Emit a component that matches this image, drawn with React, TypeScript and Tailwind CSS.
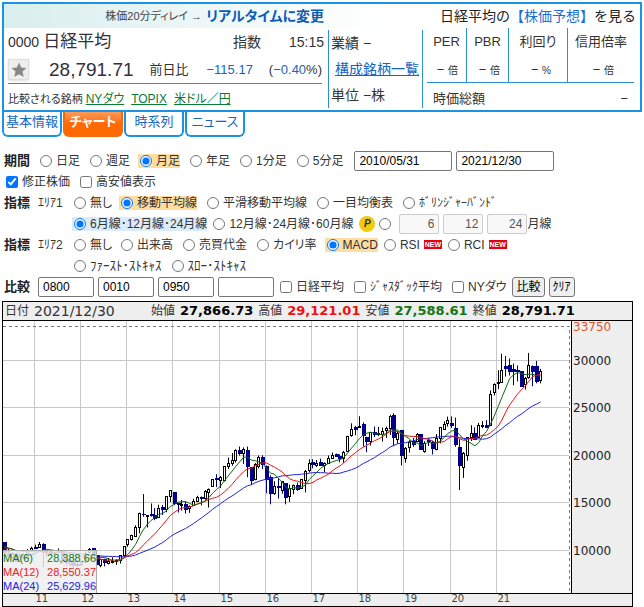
import { useState, type ReactNode } from "react";
import { clsx } from "clsx";

// [open, high, low, close] per month, from 2010/05
const CANDLES: number[][] = [
  [10847, 10847, 9395, 9768], [9650, 10251, 9347, 9382], [9279, 9807, 9091, 9537], [9509, 9750, 8807, 8824],
  [8832, 9704, 8796, 9369], [9419, 9716, 9179, 9202], [9166, 10157, 9123, 9937], [9939, 10394, 9918, 10228],
  // 2011
  [10352, 10620, 10182, 10237], [10281, 10891, 10281, 10624], [10676, 10768, 8227, 9755], [9757, 10018, 9405, 9849],
  [9964, 10017, 9406, 9693], [9719, 9849, 9318, 9816], [9878, 10207, 9824, 9833], [9907, 10040, 8619, 8955],
  [9006, 9098, 8359, 8700], [8567, 9152, 8343, 8988], [8880, 8880, 8135, 8434], [8542, 8729, 8272, 8455],
  // 2012
  [8549, 8911, 8349, 8802], [8789, 9866, 8780, 9723], [9771, 10255, 9509, 10083], [10161, 10190, 9388, 9520],
  [9471, 9471, 8512, 8542], [8440, 9044, 8238, 9006], [9103, 9136, 8328, 8695], [8642, 9222, 8529, 8839],
  [8828, 9288, 8646, 8870], [8796, 9075, 8488, 8928], [8942, 9492, 8619, 9446], [9484, 10433, 9376, 10395],
  // 2013
  [10604, 11138, 10398, 11138], [11193, 11662, 11046, 11559], [11464, 12650, 11425, 12397], [12371, 13983, 11805, 13860],
  [13799, 15942, 13555, 13774], [13570, 13724, 12415, 13677], [13746, 14953, 13562, 13668], [13692, 14466, 13188, 13388],
  [13438, 14817, 13407, 14455], [14517, 14799, 13748, 14327], [14291, 15729, 14026, 15661], [15700, 16320, 15112, 16291],
  // 2014
  [16147, 16164, 14764, 14914], [14896, 14900, 13995, 14841], [14744, 15312, 14203, 14827], [14870, 15164, 13885, 14304],
  [14370, 14744, 13964, 14632], [14706, 15442, 14690, 15162], [15179, 15759, 15101, 15620], [15600, 15700, 14753, 15424],
  [15425, 16374, 15350, 16173], [16082, 16533, 14529, 16413], [16720, 17520, 16720, 17459], [17547, 18030, 16672, 17450],
  // 2015
  [17325, 17850, 16592, 17674], [17400, 18865, 17271, 18797], [18869, 19778, 18577, 19206], [19129, 20252, 18927, 19520],
  [19510, 20655, 19257, 20563], [20500, 20952, 19990, 20235], [20212, 20850, 19115, 20585], [20510, 20946, 17714, 18890],
  [18703, 18770, 16901, 17388], [17500, 19202, 17389, 19083], [18860, 19994, 18641, 19747], [19800, 20012, 18562, 19033],
  // 2016
  [18818, 18951, 16017, 17518], [17699, 17905, 14865, 16026], [16013, 17291, 15857, 16758], [16719, 17613, 15471, 16666],
  [16357, 17251, 15975, 17234], [17097, 17097, 14864, 15575], [15698, 16938, 15106, 16569], [16415, 16943, 15921, 16887],
  [16885, 17156, 16285, 16449], [16566, 17461, 16554, 17425], [17419, 18482, 16111, 18308], [18435, 19592, 18227, 19114],
  // 2017
  [19298, 19615, 18650, 19041], [18993, 19519, 18805, 19118], [19300, 19668, 18909, 18909], [18988, 19289, 18224, 19196],
  [19154, 19998, 19144, 19650], [19692, 20318, 19686, 20033], [20055, 20200, 19856, 19925], [19907, 20113, 19280, 19646],
  [19733, 20481, 19239, 20356], [20400, 22086, 20363, 22011], [22144, 23382, 21972, 22724], [22916, 23115, 22119, 22764],
  // 2018
  [23073, 24129, 23065, 23098], [23276, 23492, 20950, 22068], [21901, 21971, 20347, 21454], [21441, 22495, 21056, 22467],
  [22453, 23050, 21931, 22201], [22169, 23011, 22038, 22304], [22233, 22949, 21462, 22553], [22642, 23032, 21851, 22865],
  [22819, 24286, 22172, 24120], [24173, 24448, 20971, 21920], [21687, 22583, 21243, 22351], [22629, 22698, 18948, 20014],
  // 2019
  [19655, 20892, 19241, 20773], [20797, 21610, 20315, 21385], [21500, 21860, 20911, 21205], [21500, 22362, 21400, 22258],
  [22184, 22184, 20581, 20601], [20410, 21497, 20289, 21275], [21566, 21823, 20993, 21521], [21361, 21556, 20110, 20704],
  [20625, 22255, 20554, 21755], [21831, 23008, 21276, 22927], [22730, 23591, 22705, 23293], [23388, 24091, 23044, 23656],
  // 2020
  [23319, 24115, 22892, 23205], [22874, 23995, 20916, 21142], [20849, 21719, 16358, 18917], [18686, 20365, 17646, 20193],
  [19991, 21955, 19448, 21877], [21910, 23185, 21530, 22288], [22338, 22965, 21710, 21710], [21947, 23431, 21947, 23139],
  [23089, 23622, 22878, 23185], [23185, 23725, 22948, 22977], [23110, 26852, 23096, 26433], [26624, 27602, 26327, 27444],
  // 2021
  [27575, 28979, 27002, 27663], [27649, 30714, 27629, 28966], [29419, 30485, 28308, 29178], [29441, 30208, 28419, 28812],
  [29024, 29685, 27385, 28860], [28998, 29480, 27795, 28791], [28832, 28832, 27272, 27283], [27493, 28279, 26954, 28089],
  [28179, 30795, 28075, 29452], [29400, 29489, 27293, 28892], [29331, 29960, 27594, 27821], [27866, 29121, 27588, 28791],
];

// closes before the first candle, needed for the moving averages
const EARLIER = [
  13481, 13376, 13072, 11259, 8576, 8512, 8859, 7994, 7568, 8109, 8828, 9522,
  9958, 10356, 10492, 10133, 10034, 9345, 10546, 10198, 10126, 11089, 11057,
];

const PRICES = [30000, 25000, 20000, 15000, 10000];
const YEARS = [11, 12, 13, 14, 15, 16, 17, 18, 19, 20, 21];

const px = (i: number) => 1.5 + i * 3.856;
const py = (p: number) => 39.5 + (30000 - p) * 0.0095;
const crisp = (n: number) => Math.floor(n) + 0.5;
const gridX = (k: number) => crisp(31.3 + 46.2 * k);

function movingAverage(n: number) {
  const closes = [...EARLIER, ...CANDLES.map((c) => c[3])];
  return CANDLES.map((_, i) => {
    const end = i + EARLIER.length + 1;
    const part = closes.slice(end - n, end);
    const avg = part.reduce((a, b) => a + b, 0) / part.length;
    return `${px(i).toFixed(1)},${py(avg).toFixed(1)}`;
  }).join(" ");
}

function Candle({ i, data }: { i: number; data: number[] }) {
  const [open, high, low, close] = data;
  const x = crisp(px(i));
  const up = close >= open;
  const top = crisp(py(Math.max(open, close)));
  const bottom = crisp(py(Math.min(open, close)));
  const color = up ? "#000" : "#00008b";
  return (
    <g>
      <line x1={x} x2={x} y1={py(high)} y2={py(low)} stroke={color} />
      {up ? (
        <rect x={x - 1} y={top} width={2} height={Math.max(bottom - top, 1)} fill="#fff" stroke={color} />
      ) : (
        <rect x={x - 1.5} y={top - 0.5} width={4} height={bottom - top + 1} fill={color} />
      )}
    </g>
  );
}

function Chart() {
  return (
    <svg viewBox="0 0 629 285" className="block w-full" role="img" aria-label="日経平均 月足チャート">
      <rect width={629} height={285} fill="#eee" />
      <rect width={568} height={272} fill="#fff" />
      <g stroke="#c8c8c8">
        {PRICES.map((p) => (
          <line key={p} x1={0} x2={566} y1={crisp(py(p) - 0.1)} y2={crisp(py(p) - 0.1)} />
        ))}
        {YEARS.map((y, k) => (
          <line key={y} x1={gridX(k)} x2={gridX(k)} y1={0} y2={272} />
        ))}
      </g>
      <path d="M0 5.5H566.5V272" fill="none" stroke="#777" strokeDasharray="3 3" />
      {CANDLES.map((c, i) => (
        <Candle key={i} i={i} data={c} />
      ))}
      <g fill="none" strokeWidth={1}>
        <polyline points={movingAverage(24)} stroke="#2222dd" />
        <polyline points={movingAverage(12)} stroke="#ee1111" />
        <polyline points={movingAverage(6)} stroke="#116611" />
      </g>
      <path d="M568.5 0V272M0 272.5H629" stroke="#000" />
      <g fontFamily="DejaVu Sans, sans-serif" fontSize={12} fill="#222">
        <text x={570} y={10} fill="#e0532f">33750</text>
        {PRICES.map((p) => (
          <text key={p} x={570} y={py(p) + 4}>{p}</text>
        ))}
      </g>
      <g fontFamily="DejaVu Sans, sans-serif" fontSize={10} fill="#444">
        {YEARS.map((y, k) => (
          <text key={y} x={gridX(k) + 1} y={281}>{y}</text>
        ))}
      </g>
    </svg>
  );
}

function Choice({
  name,
  label,
  type = "radio",
  checked = false,
  tone,
  className,
}: {
  name: string;
  label: ReactNode;
  type?: "radio" | "checkbox";
  checked?: boolean;
  tone?: "orange" | "blue";
  className?: string;
}) {
  return (
    <label
      className={clsx(
        "flex h-[14px] items-center gap-1 whitespace-nowrap",
        tone && "-ml-0.5 pl-0.5",
        tone === "orange" && "bg-[#ffdda0]",
        tone === "blue" && "bg-[#dcebfa]",
        className,
      )}
    >
      <input type={type} name={name} defaultChecked={checked} className="m-0 size-3 shrink-0 accent-[#0075ff]" />
      {label}
    </label>
  );
}

function Row({ title, area, children }: { title?: string; area?: string; children: ReactNode }) {
  return (
    <div className="flex h-[21px] items-center">
      <span className="w-[34px] shrink-0 text-[13px] font-bold text-[#222]">{title}</span>
      {area !== undefined && <span className="w-9 shrink-0">{area}</span>}
      <div className="flex items-center gap-[10px]">{children}</div>
    </div>
  );
}

const NewBadge = () => (
  <span className="flex h-[9px] w-[18px] items-center justify-center bg-[#e60012] text-[7px] font-bold leading-none text-white">
    NEW
  </span>
);

const field = "h-5 rounded-[2px] border border-[#767676] bg-white px-1 text-xs text-black";
const button = "h-5 rounded-[3px] border border-[#767676] bg-[#efefef] px-[3px] text-xs leading-none text-black";

const TABS = ["基本情報", "チャート", "時系列", "ニュース"];
const RATIOS = [
  { label: "PER", unit: "倍", width: "w-10" },
  { label: "PBR", unit: "倍", width: "w-[42px]" },
  { label: "利回り", unit: "%", width: "w-[59px]" },
  { label: "信用倍率", unit: "倍", width: "grow" },
];

function Quote() {
  return (
    <section className="border-2 border-[#1a93e6]">
      <div className="flex h-6 items-center bg-linear-to-r from-[#d9eeee] to-white to-60% pr-1">
        <div className="flex w-[320px] items-center justify-end gap-1 whitespace-nowrap text-[11px] text-[#444]">
          株価20分ディレイ →
          <a href="#realtime" className="text-[14px] font-bold text-[#0a5cb8]">リアルタイムに変更</a>
        </div>
        <div className="ml-auto whitespace-nowrap text-[14px] text-[#222] [font-feature-settings:normal]">
          日経平均の<a href="#forecast" className="text-[#1a6fd0]">【株価予想】</a>を見る
        </div>
      </div>
      <div className="flex h-[82px]">
        <div className="flex w-[324px] shrink-0 flex-col pl-1 pr-1">
          <div className="flex h-7 items-center">
            <span className="text-[14px]">0000</span>
            <h1 className="ml-1 text-[17px] text-[#332f3c]">日経平均</h1>
            <span className="ml-auto text-[14px]">指数</span>
            <span className="ml-7 text-[14px]">15:15</span>
          </div>
          <div className="mr-0.5 flex h-7 items-center border-b border-[#2b8fd6] whitespace-nowrap">
            <button
              aria-label="お気に入り"
              className="flex size-[21px] items-center justify-center border border-[#ddd] bg-[#eee] shadow-sm"
            >
              <svg viewBox="0 0 16 16" className="size-4">
                <path d="M8 .5l2.2 5 5.3.5-4 3.6 1.2 5.4L8 12.2 3.3 15l1.2-5.4-4-3.6 5.3-.5z" fill="#888" />
              </svg>
            </button>
            <span className="ml-5 text-[19px] text-[#332f3c]">28,791.71</span>
            <span className="ml-4 text-[13px]">前日比</span>
            <span className="ml-auto text-[13px] text-[#1766c2]">−115.17</span>
            <span className="ml-4 text-[13px]">
              (<span className="text-[#1766c2]">−0.40</span>%)
            </span>
          </div>
          <div className="flex grow items-center gap-[7px] whitespace-nowrap pt-1 text-[12px] text-[#0b7a35]">
            <span className="-mr-1 text-[11px] text-[#333]">比較される銘柄</span>
            <a href="#ny" className="underline">NYダウ</a>
            <a href="#topix" className="underline">TOPIX</a>
            <a href="#usd" className="underline">米ドル／円</a>
          </div>
        </div>
        <div className="my-0.5 flex w-[95px] shrink-0 flex-col justify-around border-x border-[#2b8fd6] pl-0.5 text-[14px] leading-5">
          <span>業績 −</span>
          <a href="#list" className="ml-1 text-[#1766c2] underline">構成銘柄一覧</a>
          <span>単位 −株</span>
        </div>
        <div className="flex grow flex-col pl-1 pr-1.5">
          <dl className="flex h-[55px] border-b border-[#2b8fd6] text-center">
            {RATIOS.map((r) => (
              <div
                key={r.label}
                className={clsx("border-[#2b8fd6] text-[13px] leading-7 not-last:border-r", r.width)}
              >
                <dt className="h-7 whitespace-nowrap">{r.label}</dt>
                <dd className={clsx("whitespace-nowrap text-right", r.unit === "%" ? "pr-4" : r.width === "grow" ? "pr-5" : "pr-2")}>
                  − <span className="text-[10px]">{r.unit}</span>
                </dd>
              </div>
            ))}
          </dl>
          <div className="flex grow items-center justify-between px-1.5 pt-1 text-[13px]">
            <span>時価総額</span>
            <span>−</span>
          </div>
        </div>
      </div>
    </section>
  );
}

export default function App() {
  const [tab, setTab] = useState("チャート");

  return (
    <main className="bg-white px-0.5 pt-0.5 font-['Liberation_Sans','Noto_Sans_CJK_JP',sans-serif] text-xs leading-[14px] text-[#333] [font-feature-settings:'palt']">
      <Quote />
      <nav className="flex gap-px">
        {TABS.map((t) => (
          <button
            key={t}
            onClick={() => setTab(t)}
            className={clsx(
              "h-[25px] w-[60px] rounded-b-md border-2 border-t-0 pb-1 text-[13px] leading-none whitespace-nowrap",
              t === tab
                ? "border-[#f76b0a] bg-linear-to-b from-[#ff9a55] to-[#ff6a00] to-50% font-bold text-white"
                : "border-[#1a93e6] bg-white text-[#1766c2]",
            )}
          >
            {t}
          </button>
        ))}
      </nav>

      <form className="mb-1 mt-[13px] pl-0.5" onSubmit={(e) => e.preventDefault()}>
        <Row title="期間">
          <div className="-ml-px mr-px flex gap-[10px] pl-[3px]">
            <Choice name="period" label="日足" />
            <Choice name="period" label="週足" />
            <Choice name="period" label="月足" tone="orange" checked />
            <Choice name="period" label="年足" />
            <Choice name="period" label="1分足" />
            <Choice name="period" label="5分足" />
          </div>
          <div className="flex gap-1">
            <input aria-label="開始日" defaultValue="2010/05/31" className={clsx(field, "w-[98px]")} />
            <input aria-label="終了日" defaultValue="2021/12/30" className={clsx(field, "w-[98px]")} />
          </div>
        </Row>
        <div className="flex h-[21px] items-center gap-[10px] pl-0.5">
          <Choice type="checkbox" name="adjusted" label="修正株価" checked />
          <Choice type="checkbox" name="highlow" label="高安値表示" />
        </div>
        <Row title="指標" area="ｴﾘｱ1">
          <Choice name="area1" label="無し" className="w-[37px]" />
          <Choice name="area1" label="移動平均線" tone="orange" checked />
          <Choice name="area1" label="平滑移動平均線" />
          <Choice name="area1" label="一目均衡表" />
          <Choice name="area1" label="ﾎﾞﾘﾝｼﾞｬｰﾊﾞﾝﾄﾞ" />
        </Row>
        <Row area="">
          <Choice name="lines" label="6月線･12月線･24月線" tone="blue" checked className="-mr-1" />
          <Choice name="lines" label="12月線･24月線･60月線" className="-mr-1" />
          <div className="flex items-center gap-1">
            <span className="flex size-4 items-center justify-center rounded-full bg-[#f0cb10] text-[10px] font-bold italic text-[#333]">
              P
            </span>
            <input type="radio" name="lines" aria-label="任意の月線" className="mr-1 size-3" />
            {[6, 12, 24].map((n) => (
              <input
                key={n}
                aria-label={`${n}月線`}
                defaultValue={n}
                disabled
                className="h-5 w-10 rounded-[2px] border border-[#ccc] bg-[#f8f8f8] px-1 text-right text-xs text-[#555]"
              />
            ))}
            <span className="-ml-1">月線</span>
          </div>
        </Row>
        <Row title="指標" area="ｴﾘｱ2">
          <Choice name="area2" label="無し" className="w-[37px]" />
          <Choice name="area2" label="出来高" />
          <Choice name="area2" label="売買代金" />
          <Choice name="area2" label="カイリ率" />
          <Choice name="area2" label="MACD" tone="orange" checked className="-mr-1" />
          <Choice name="area2" label={<>RSI <NewBadge /></>} className="-mr-1" />
          <Choice name="area2" label={<>RCI <NewBadge /></>} />
        </Row>
        <Row area="">
          <Choice name="area2" label="ﾌｧｰｽﾄ･ｽﾄｷｬｽ" className="text-[13px]" />
          <Choice name="area2" label="ｽﾛｰ･ｽﾄｷｬｽ" className="text-[13px]" />
        </Row>
        <Row title="比較">
          <div className="flex gap-1">
            {["0800", "0010", "0950", ""].map((code, i) => (
              <input key={i} aria-label={`比較銘柄${i + 1}`} defaultValue={code} className={clsx(field, "w-14")} />
            ))}
          </div>
          <Choice type="checkbox" name="nikkei" label="日経平均" className="-ml-1" />
          <Choice type="checkbox" name="jasdaq" label="ｼﾞｬｽﾀﾞｯｸ平均" />
          <Choice type="checkbox" name="ny" label="NYダウ" />
          <div className="-ml-1 flex gap-1">
            <button className={button}>比較</button>
            <button className={button}>ｸﾘｱ</button>
          </div>
        </Row>
      </form>

      <section className="relative mr-[9px] border border-black bg-[#eee]">
        <div className="flex h-[19px] items-center gap-[5px] whitespace-nowrap border-b border-black pl-0.5 font-['DejaVu_Sans','Noto_Sans_CJK_JP',sans-serif] text-[12px]">
          <span>日付</span>
          <span className="w-28 text-[14px]">2021/12/30</span>
          <span>始値</span>
          <b className="text-[13px] text-black">27,866.73</b>
          <span>高値</span>
          <b className="text-[13px] text-[#e11]">29,121.01</b>
          <span>安値</span>
          <b className="text-[13px] text-[#171]">27,588.61</b>
          <span>終値</span>
          <b className="text-[13px] text-black">28,791.71</b>
        </div>
        <Chart />
        <dl className="absolute bottom-[13px] left-0 w-[94px] border-r border-t border-[#aaa] bg-[#eeeeee]/85 text-[11px]">
          <div className="flex justify-between text-[#171]"><dt>MA(6)</dt><dd>28,388.66</dd></div>
          <div className="flex justify-between text-[#e22]"><dt>MA(12)</dt><dd>28,550.37</dd></div>
          <div className="flex justify-between text-[#22d]"><dt>MA(24)</dt><dd>25,629.96</dd></div>
        </dl>
      </section>
    </main>
  );
}
